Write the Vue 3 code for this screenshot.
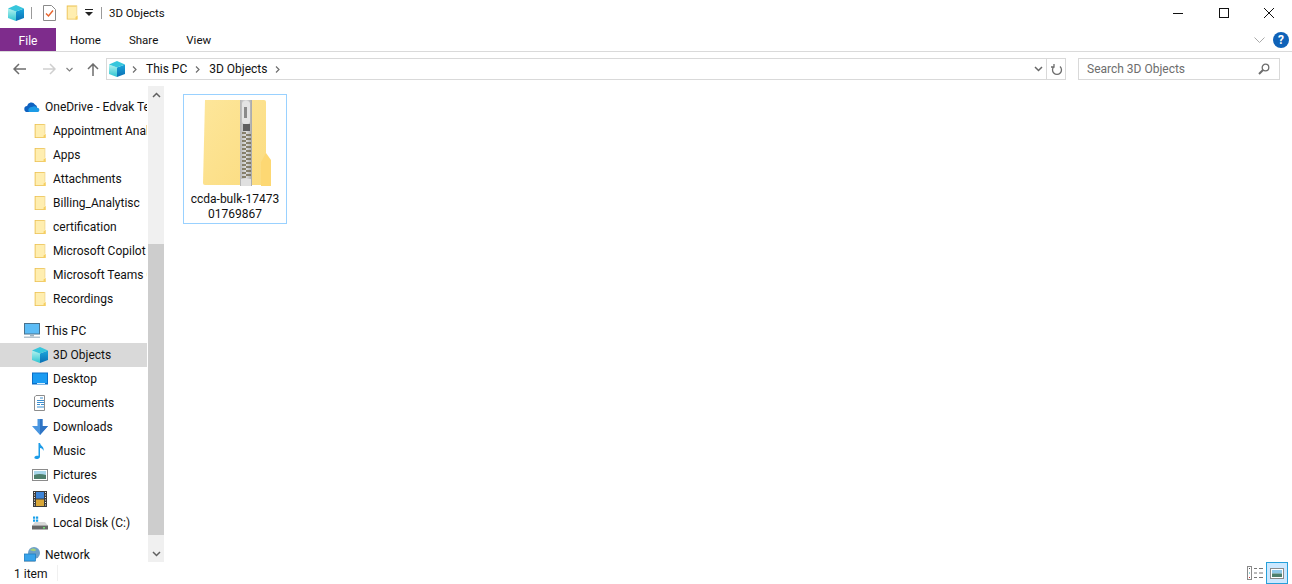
<template>
  <div class="window">
    <svg class="sprites" width="0" height="0">
      <defs>
        <linearGradient id="cubeLeft" x1="0" y1="0" x2="0" y2="1">
          <stop offset="0" stop-color="#b5f3ee" />
          <stop offset="1" stop-color="#2cc4d2" />
        </linearGradient>
        <linearGradient id="cubeRight" x1="0" y1="0" x2="0" y2="1">
          <stop offset="0" stop-color="#1ba6dc" />
          <stop offset="1" stop-color="#0a6fb4" />
        </linearGradient>
        <linearGradient id="zipBody" x1="0" y1="0" x2="1" y2="1">
          <stop offset="0" stop-color="#fde69a" />
          <stop offset="1" stop-color="#fbdc80" />
        </linearGradient>
        <linearGradient id="zipMetal" x1="0" y1="0" x2="1" y2="0">
          <stop offset="0" stop-color="#b4b4b4" />
          <stop offset=".5" stop-color="#dedede" />
          <stop offset="1" stop-color="#a8a8a8" />
        </linearGradient>
      </defs>
      <symbol id="cube" viewBox="0 0 16 16">
        <path d="M0 3.500l8 3v9.500l-8-3z" fill="url(#cubeLeft)" />
        <path d="M8 6.500l8-3V13l-8 3z" fill="url(#cubeRight)" />
        <path d="M8 0l8 3.500-8 3-8-3z" fill="#37c6dc" />
      </symbol>
      <symbol id="folder" viewBox="0 0 16 18">
        <path d="M2.500 1.500h11v15h-11z" fill="#ffeeb0" />
        <path d="M2 1h11.500v1H3v14h10.500v1H2z" fill="#ecc04e" />
        <path d="M12 14 14.500 12v5H12z" fill="#f6cf62" />
        <path d="M13 1h1v11h-1z" fill="#f1d78e" />
      </symbol>
      <symbol id="cloud" viewBox="0 0 16 11">
        <path d="M3.500 10.500a3 3 0 0 1-.4-6 4.200 4.200 0 0 1 7.800-1.400 3.500 3.500 0 0 1 2.300 3.100 2.200 2.200 0 0 1-.2 4.300z" fill="#0f62c0" />
        <path d="M5 10.500c-1.800-2.700.4-5.300 3-5 2-1.600 4.600-.8 5.200 1.100 2.200-.1 3.200 2.800.8 3.900z" fill="#1c9be6" />
      </symbol>
      <symbol id="pc" viewBox="0 0 16 16">
        <rect x=".5" y=".5" width="15" height="10.500" fill="#5cbcf6" stroke="#48728e" />
        <rect x="6" y="11.500" width="4" height="2" fill="#9db2c0" />
        <rect y="13.500" width="16" height="1.500" fill="#b4c3ce" />
      </symbol>
      <symbol id="desktop" viewBox="0 0 16 13">
        <rect width="16" height="12" fill="#0a6fc8" />
        <rect x="1" y="1" width="14" height="9.500" fill="#1c9cf2" />
        <rect x="5" y="10.500" width="8" height="1" fill="#d8effc" />
      </symbol>
      <symbol id="docs" viewBox="0 0 16 16">
        <path d="M4 .500h8.500v15h-10V2z" fill="#fff" stroke="#8d8d8d" />
        <path d="M8 3h3M5 5.500h7M5 7.500h7M5 9.500h3M9 9.500h3M5 12h7" stroke="#3d8fd0" />
      </symbol>
      <symbol id="download" viewBox="0 0 16 16">
        <path d="M5.500 0h5v7H16l-8 9-8-9h5.500z" fill="#4a96e0" />
        <path d="M8 0h2.500v7H16l-8 9z" fill="#2f74c4" />
      </symbol>
      <symbol id="music" viewBox="0 0 16 16">
        <path d="M6.500 0h1.500c.5 3 4.500 3.500 3.500 8-.5-2-2-3-3.500-3v8.500C8 15.500 6 16 4.500 16S2 15 2.500 14s2.500-1.500 4-1.200z" fill="#1c9ce8" />
      </symbol>
      <symbol id="pictures" viewBox="0 0 16 12">
        <rect x=".5" y=".5" width="15" height="11" fill="#fff" stroke="#8b8b8b" />
        <rect x="2" y="2" width="12" height="4" fill="#a8d6ea" />
        <path d="M2 6c4-1.500 8-1 12 0v4H2z" fill="#4d7f6c" />
      </symbol>
      <symbol id="videos" viewBox="0 0 14 16">
        <rect width="14" height="16" fill="#3b3b3b" />
        <rect x="3" y="1" width="8" height="6.500" fill="#3b84d8" />
        <rect x="3" y="8.500" width="8" height="6.500" fill="#d8a637" />
        <path d="M1 1.500h1M1 4h1M1 6.500h1M1 9h1M1 11.500h1M1 14h1M12 1.500h1M12 4h1M12 6.500h1M12 9h1M12 11.500h1M12 14h1" stroke="#eee" />
      </symbol>
      <symbol id="disk" viewBox="0 0 16 13">
        <path d="M1 0h2.200v2.200H1zM4 0h2.200v2.200H4zM1 3h2.200v2.200H1zM4 3h2.200v2.200H4z" fill="#18a0ea" />
        <path d="M3 5.500h10l3 3.500H0z" fill="#d8d8d8" />
        <rect y="9" width="16" height="4" fill="#666" />
        <rect x="11" y="10.500" width="2" height="1.500" fill="#6fe06f" />
      </symbol>
      <symbol id="network" viewBox="0 0 16 16">
        <circle cx="10" cy="6" r="6" fill="#6c9fc8" />
        <path d="M6 3c2-2 5-2 6 0-1 2-4 1-6 0z" fill="#a6d078" />
        <rect x=".4" y="7" width="11" height="7" fill="#38a3ea" stroke="#1f7fc2" stroke-width=".8" />
        <rect x="0" y="14.500" width="11" height="1" fill="#6d8fa6" />
      </symbol>
    </svg>

    <header class="titlebar">
      <div class="qat">
        <svg class="qat-cube"><use href="#cube" /></svg>
        <span class="qat-sep"></span>
        <svg class="qat-check" viewBox="0 0 13 16">
          <path d="M.5.500h8l4 4v11H.5z" fill="#fff" stroke="#8a8a8a" />
          <path d="M3 8.500l2.500 2.500L10 5.500" fill="none" stroke="#e8622a" stroke-width="1.400" />
        </svg>
        <svg class="qat-folder"><use href="#folder" /></svg>
        <svg class="qat-drop" viewBox="0 0 8 7">
          <path d="M0 0h8v1H0zM0 3h8L4 7z" fill="#222" />
        </svg>
        <span class="qat-sep last"></span>
        <span class="title">3D Objects</span>
      </div>
      <div class="win-controls">
        <button class="win-btn"><svg width="10" height="10"><path d="M0 5.500h10" stroke="#111" /></svg></button>
        <button class="win-btn"><svg width="10" height="10"><rect x=".5" y=".5" width="9" height="9" fill="none" stroke="#111" /></svg></button>
        <button class="win-btn"><svg width="10" height="10"><path d="M0 0l10 10M10 0 0 10" stroke="#111" /></svg></button>
      </div>
    </header>

    <nav class="ribbon">
      <div class="file-tab">File</div>
      <div class="tab first">Home</div>
      <div class="tab">Share</div>
      <div class="tab">View</div>
      <div class="ribbon-right">
        <svg width="11" height="6" viewBox="0 0 11 6"><path d="M.5.500l5 5 5-5" fill="none" stroke="#a9a9a9" /></svg>
        <span class="help">?</span>
      </div>
    </nav>

    <div class="navbar">
      <div class="nav-buttons">
        <svg class="back" width="13" height="12" viewBox="0 0 13 12"><path d="M6 1 1 6l5 5M1 6h12" fill="none" stroke="#6d6d6d" stroke-width="1.500" /></svg>
        <svg class="forward" width="13" height="12" viewBox="0 0 13 12"><path d="M7 1l5 5-5 5M12 6H0" fill="none" stroke="#cfcfcf" stroke-width="1.500" /></svg>
        <svg class="recent" width="7" height="5" viewBox="0 0 7 5"><path d="M.5 1l3 3 3-3" fill="none" stroke="#808080" stroke-width="1.200" /></svg>
        <svg class="up" width="12" height="13" viewBox="0 0 12 13"><path d="M1 6l5-5 5 5M6 1v12" fill="none" stroke="#6d6d6d" stroke-width="1.500" /></svg>
      </div>
      <div class="address">
        <svg class="address-cube"><use href="#cube" /></svg>
        <template v-for="crumb in crumbs" :key="crumb">
          <svg class="crumb-arrow" width="5" height="7" viewBox="0 0 5 7"><path d="M1 .5l3 3-3 3" fill="none" stroke="#6e6e6e" stroke-width="1.200" /></svg>
          <span class="crumb">{{ crumb }}</span>
        </template>
        <svg class="crumb-arrow" width="5" height="7" viewBox="0 0 5 7"><path d="M1 .5l3 3-3 3" fill="none" stroke="#6e6e6e" stroke-width="1.200" /></svg>
        <div class="address-end">
          <svg width="9" height="6" viewBox="0 0 9 6"><path d="M1 1l3.500 3.500L8 1" fill="none" stroke="#666" stroke-width="1.500" /></svg>
          <span class="address-div"></span>
          <svg class="refresh" width="12" height="13" viewBox="0 0 12 13">
            <path d="M3 3.500a4.500 4.500 0 1 0 6 0M3 1v3h-3" fill="none" stroke="#6d6d6d" stroke-width="1.300" />
          </svg>
        </div>
      </div>
      <div class="search">
        <span class="search-text">Search 3D Objects</span>
        <svg width="12" height="12" viewBox="0 0 12 12">
          <circle cx="7.500" cy="4.500" r="3.300" fill="none" stroke="#6d6d6d" stroke-width="1.300" />
          <path d="M5 7 1 11" stroke="#6d6d6d" stroke-width="2" />
        </svg>
      </div>
    </div>

    <div class="body">
      <aside class="sidebar">
        <div class="tree">
          <div
            v-for="row in tree"
            :key="row.label"
            class="row"
            :class="{ root: row.root, selected: row.selected, gap: row.gap }"
          >
            <svg class="row-icon" :class="row.icon"><use :href="'#' + row.icon" /></svg>
            <span class="row-label">{{ row.label }}</span>
          </div>
        </div>
        <div class="scrollbar">
          <div class="scroll-btn">
            <svg width="9" height="6" viewBox="0 0 9 6"><path d="M1 5l3.500-3.500L8 5" fill="none" stroke="#606060" stroke-width="1.500" /></svg>
          </div>
          <div class="scroll-track"><div class="scroll-thumb"></div></div>
          <div class="scroll-btn">
            <svg width="9" height="6" viewBox="0 0 9 6"><path d="M1 1l3.500 3.500L8 1" fill="none" stroke="#606060" stroke-width="1.500" /></svg>
          </div>
        </div>
      </aside>

      <main class="content">
        <div class="file-item">
          <svg class="zip" width="68" height="86" viewBox="0 0 68 86">
            <path d="M2 0h59a2 2 0 0 1 2 2v83H2a2 2 0 0 1-2-2z" fill="url(#zipBody)" />
            <path d="M58 86V62l5-9 5 7v26z" fill="#fdd873" />
            <rect x="37" y="0" width="12" height="86" fill="url(#zipMetal)" />
            <rect x="39" y="1" width="8" height="23" rx="3" fill="#e4e4e4" />
            <rect x="41" y="7" width="3" height="11" fill="#8a8a8a" />
            <rect x="40" y="24" width="7" height="7" fill="#5f5f5f" />
            <path d="M39 33h4M43 35h5M39 37h4M43 39h5M39 41h4M43 43h5M39 45h4M43 47h5M39 49h4M43 51h5M39 53h4M43 55h5M39 57h4M43 59h5M39 61h4M43 63h5M39 65h4M43 67h5M39 69h4M43 71h5M39 73h4M43 75h5M39 77h4" stroke="#6f664a" stroke-width="1.500" />
            <rect x="38" y="79" width="10" height="7" fill="#e0e0e0" />
          </svg>
          <span class="file-name">ccda-bulk-1747301769867</span>
        </div>
      </main>
    </div>

    <footer class="statusbar">
      <span class="count">1 item</span>
      <span class="status-sep"></span>
      <div class="view-btns">
        <div class="view-btn">
          <svg width="16" height="14" viewBox="0 0 16 14">
            <rect x=".5" y=".5" width="4" height="13" fill="#fff" stroke="#8a8a8a" />
            <path d="M7 2.500h3M12 2.500h4M7 7h3M12 7h4M7 11.500h3M12 11.500h4" stroke="#767676" />
            <path d="M2 2h1v1H2z" fill="#555" /><path d="M2 6.500h1v1H2z" fill="#3aa" /><path d="M2 11h1v1H2z" fill="#c33" />
          </svg>
        </div>
        <div class="view-btn active">
          <svg width="14" height="11" viewBox="0 0 14 11">
            <rect x=".5" y=".5" width="13" height="10" fill="#fff" stroke="#8a8a8a" />
            <rect x="2" y="2" width="10" height="3.500" fill="#8ec8e8" />
            <rect x="2" y="5.500" width="10" height="3.500" fill="#4d7f6c" />
          </svg>
        </div>
      </div>
    </footer>
  </div>
</template>

<script setup>
const crumbs = ['This PC', '3D Objects']

const tree = [
  { label: 'OneDrive - Edvak Tech', icon: 'cloud', root: true },
  { label: 'Appointment Analytics', icon: 'folder' },
  { label: 'Apps', icon: 'folder' },
  { label: 'Attachments', icon: 'folder' },
  { label: 'Billing_Analytisc', icon: 'folder' },
  { label: 'certification', icon: 'folder' },
  { label: 'Microsoft Copilot Chat', icon: 'folder' },
  { label: 'Microsoft Teams Chat', icon: 'folder' },
  { label: 'Recordings', icon: 'folder' },
  { label: 'This PC', icon: 'pc', root: true, gap: true },
  { label: '3D Objects', icon: 'cube', selected: true },
  { label: 'Desktop', icon: 'desktop' },
  { label: 'Documents', icon: 'docs' },
  { label: 'Downloads', icon: 'download' },
  { label: 'Music', icon: 'music' },
  { label: 'Pictures', icon: 'pictures' },
  { label: 'Videos', icon: 'videos' },
  { label: 'Local Disk (C:)', icon: 'disk' },
  { label: 'Network', icon: 'network', root: true, gap: true }
]
</script>

<style>
html,
body {
  margin: 0;
  background: #fff;
}
</style>

<style scoped>
.window {
  width: 1292px;
  height: 584px;
  display: flex;
  flex-direction: column;
  overflow: hidden;
  font-family: Roboto, "Noto Sans", sans-serif;
  font-size: 12px;
  color: #111;
  background: #fff;
}

.sprites {
  position: absolute;
}

.titlebar {
  height: 28px;
  flex: none;
  display: flex;
  justify-content: space-between;
}

.qat {
  display: flex;
  align-items: center;
  height: 25px;
  padding-left: 8px;
}

.qat-cube {
  width: 16px;
  height: 16px;
}

.qat-sep {
  width: 1px;
  height: 12px;
  background: #9a9a9a;
  margin-left: 7px;
}

.qat-sep.last {
  margin-left: 8px;
}

.qat-check {
  width: 13px;
  height: 16px;
  margin-left: 11px;
}

.qat-folder {
  width: 14px;
  height: 17px;
  margin-left: 9px;
}

.qat-drop {
  width: 8px;
  height: 7px;
  margin-left: 6px;
}

.title {
  margin-left: 7px;
  padding-top: 1px;
  font-size: 11.5px;
}

.win-controls {
  display: flex;
}

.win-btn {
  width: 45.500px;
  height: 25px;
  border: none;
  background: none;
  padding: 0;
  display: flex;
  align-items: center;
  justify-content: center;
}

.ribbon {
  height: 24px;
  box-sizing: border-box;
  flex: none;
  display: flex;
  align-items: center;
  border-bottom: 1px solid #dadada;
}

.file-tab {
  width: 56px;
  height: 23px;
  padding-top: 2px;
  box-sizing: border-box;
  background: #7e2c8c;
  color: #fff;
  display: flex;
  align-items: center;
  justify-content: center;
}

.tab {
  margin-left: 28px;
  padding-top: 2px;
  line-height: 21px;
  font-size: 11.5px;
}

.tab.first {
  margin-left: 14px;
}

.ribbon-right {
  margin-left: auto;
  display: flex;
  align-items: center;
  gap: 8px;
  padding-right: 3px;
}

.help {
  width: 16px;
  height: 16px;
  border-radius: 50%;
  background: #0f62b8;
  color: #fff;
  font-weight: 700;
  font-size: 12px;
  line-height: 16px;
  text-align: center;
}

.navbar {
  height: 34px;
  flex: none;
  display: flex;
  align-items: center;
  padding-right: 12px;
}

.nav-buttons {
  width: 106px;
  flex: none;
  display: flex;
  align-items: center;
  padding-left: 13px;
  box-sizing: border-box;
}

.forward {
  margin-left: 17px;
}

.recent {
  margin-left: 10px;
}

.up {
  margin-left: 14px;
}

.address {
  width: 960px;
  height: 22px;
  box-sizing: border-box;
  border: 1px solid #d9d9d9;
  display: flex;
  align-items: center;
  padding-left: 2px;
}

.address-cube {
  width: 16px;
  height: 16px;
  margin-right: 7px;
}

.crumb-arrow {
  flex: none;
}

.crumb {
  margin: 0 8px 0 9px;
}

.address-end {
  margin-left: auto;
  height: 100%;
  display: flex;
  align-items: center;
  padding-right: 2px;
}

.address-div {
  width: 1px;
  height: 100%;
  background: #d9d9d9;
  margin-left: 3px;
  margin-right: 4px;
}

.search {
  width: 202px;
  height: 22px;
  box-sizing: border-box;
  margin-left: 12px;
  border: 1px solid #d9d9d9;
  display: flex;
  align-items: center;
  justify-content: space-between;
  padding: 0 9px 0 8px;
  color: #6d6d6d;
}

.body {
  flex: 1;
  min-height: 0;
  display: flex;
}

.sidebar {
  width: 164px;
  flex: none;
  display: flex;
}

.tree {
  width: 148px;
  padding-top: 9px;
  overflow: hidden;
}

.row {
  height: 24px;
  width: 147px;
  display: flex;
  align-items: center;
  padding-left: 32px;
  box-sizing: border-box;
  white-space: nowrap;
  overflow: hidden;
}

.row.root {
  padding-left: 24px;
}

.row.gap {
  margin-top: 8px;
}

.row.selected {
  background: #d9d9d9;
}

.row-icon {
  width: 16px;
  height: 16px;
  flex: none;
  margin-right: 5px;
}

.scrollbar {
  width: 16px;
  display: flex;
  flex-direction: column;
  background: #f0f0f0;
}

.scroll-btn {
  height: 17px;
  flex: none;
  display: flex;
  align-items: center;
  justify-content: center;
}

.scroll-track {
  flex: 1;
  display: flex;
  flex-direction: column;
  justify-content: flex-end;
  padding-bottom: 10px;
}

.scroll-thumb {
  height: 291px;
  background: #cdcdcd;
}

.content {
  flex: 1;
  padding: 8px 19px;
}

.file-item {
  width: 104px;
  height: 130px;
  box-sizing: border-box;
  border: 1px solid #99d1ff;
  display: flex;
  flex-direction: column;
  align-items: center;
  padding-top: 5px;
}

.zip {
  flex: none;
  margin-left: 4px;
}

.file-name {
  width: 92px;
  margin-top: 6px;
  line-height: 15px;
  text-align: center;
  word-break: break-all;
}

.statusbar {
  height: 22px;
  flex: none;
  display: flex;
  align-items: center;
  padding-left: 14px;
}

.count {
  padding-top: 1px;
}

.status-sep {
  width: 1px;
  height: 16px;
  background: #f0f0f0;
  margin-left: 10px;
}

.view-btns {
  margin-left: auto;
  display: flex;
  align-items: center;
  padding-right: 4px;
  gap: 3px;
}

.view-btn {
  height: 22px;
  display: flex;
  align-items: center;
  justify-content: center;
}

.view-btn.active {
  width: 22px;
  box-sizing: border-box;
  background: #cce8ff;
  border: 1px solid #26a0da;
}
</style>
